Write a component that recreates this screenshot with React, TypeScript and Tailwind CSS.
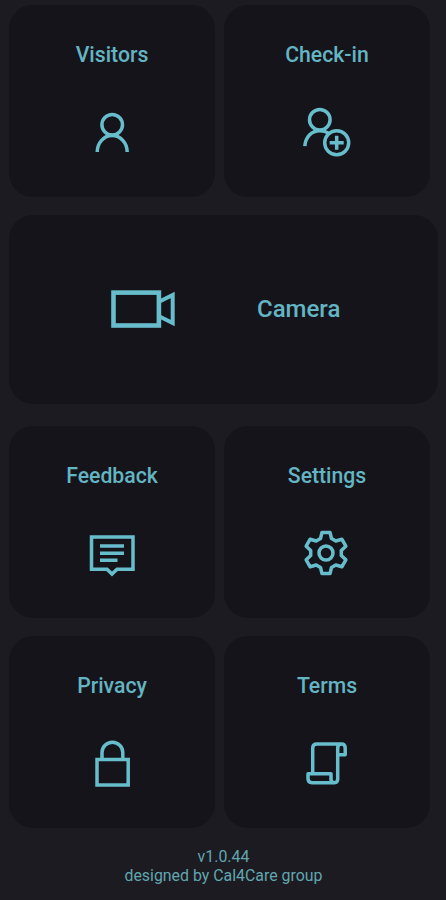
import type { ReactNode } from "react";

function Icon({ children }: { children: ReactNode }) {
  return (
    <svg
      viewBox="0 0 56 56"
      className="h-14 w-14 shrink-0"
      fill="none"
      stroke="currentColor"
      strokeWidth={3.5}
    >
      {children}
    </svg>
  );
}

function Tile({ title, children }: { title: string; children: ReactNode }) {
  return (
    <button className="flex h-48 w-[206px] flex-col items-center rounded-[24px] bg-[#15141a] pt-[34px]">
      <span className="h-8 text-[21.2px] leading-8 font-medium whitespace-nowrap text-[#64b5c3]">
        {title}
      </span>
      <span className="mt-[33px]">{children}</span>
    </button>
  );
}

const gearTeeth = [0, 60, 120, 180, 240, 300]
  .flatMap((deg) => {
    const a = (deg * Math.PI) / 180;
    return [
      [-5.5, -14.5],
      [-4, -20.6],
      [4, -20.6],
      [5.5, -14.5],
    ].map(
      ([x, y]) =>
        `${(27 + x * Math.cos(a) - y * Math.sin(a)).toFixed(2)},${(28 + x * Math.sin(a) + y * Math.cos(a)).toFixed(2)}`,
    );
  })
  .join(" ");

export default function App() {
  return (
    <main className="flex h-[900px] w-[446px] flex-col overflow-hidden bg-[#1c1b21] pt-[5px] pl-[9px] font-[Roboto,sans-serif] text-[#67bdcb]">
      <div className="flex gap-[9px]">
        <Tile title="Visitors">
          <Icon>
            <circle cx="28.2" cy="20.7" r="10.3" />
            <path d="M13.2 48A15 16.5 0 0 1 43.2 48" />
          </Icon>
        </Tile>
        <Tile title="Check-in">
          <Icon>
            <circle cx="20.8" cy="15.7" r="10.3" />
            <path d="M5.8 42.2C6.5 33 12.5 26.8 20.8 26.8C24.5 26.8 27.3 27.7 30 29.4" />
            <circle cx="37.7" cy="38.7" r="12" />
            <path d="M37.7 31.7v14M30.7 38.7h14" />
          </Icon>
        </Tile>
      </div>

      <button className="mt-[18px] flex h-[189px] w-[429px] items-center rounded-[24px] bg-[#15141a] pb-[2px] pl-[102px]">
        <svg
          viewBox="0 0 64 38"
          className="h-[38px] w-16"
          fill="none"
          stroke="currentColor"
          strokeWidth={4.6}
        >
          <rect x="2.5" y="2.6" width="45.4" height="32.9" />
          <path d="M49 11.3L61.7 5V33L49 26.7" strokeWidth={4} />
        </svg>
        <span className="ml-[82px] text-[24px] leading-8 font-medium text-[#64b5c3]">Camera</span>
      </button>

      <div className="mt-[22px] flex gap-[9px]">
        <Tile title="Feedback">
          <Icon>
            <path d="M7.5 12H49V44.2H33L28 49L23 44.2H7.5Z" />
            <path d="M16 21H40M16 28.3H40M16 35.3H33.5" />
          </Icon>
        </Tile>
        <Tile title="Settings">
          <Icon>
            <polygon points={gearTeeth} strokeLinejoin="round" />
            <circle cx="27" cy="28" r="7" />
          </Icon>
        </Tile>
      </div>

      <div className="mt-[18px] flex gap-[9px]">
        <Tile title="Privacy">
          <Icon>
            <rect x="13" y="24.5" width="31.2" height="25.5" />
            <path d="M18 24.5V17.6A10.4 10.4 0 0 1 38.8 17.6V24.5" />
          </Icon>
        </Tile>
        <Tile title="Terms">
          <Icon>
            <path
              d="M13.7 38.5V13Q13.7 9 18 9H42.5Q46.2 9 46.2 13V19.7H38.7M42.5 9Q38.7 9 38.7 13V44Q38.7 47.7 35.5 47.7H13Q9 47.7 9 43.5V38.8H32V44.5Q32 47.7 35.5 47.7"
              strokeLinejoin="round"
            />
          </Icon>
        </Tile>
      </div>

      <footer className="mt-5 w-[429px] text-center text-[15.9px] leading-[18.5px] text-[#62a6b0]">
        <p>v1.0.44</p>
        <p>designed by Cal4Care group</p>
      </footer>
    </main>
  );
}
